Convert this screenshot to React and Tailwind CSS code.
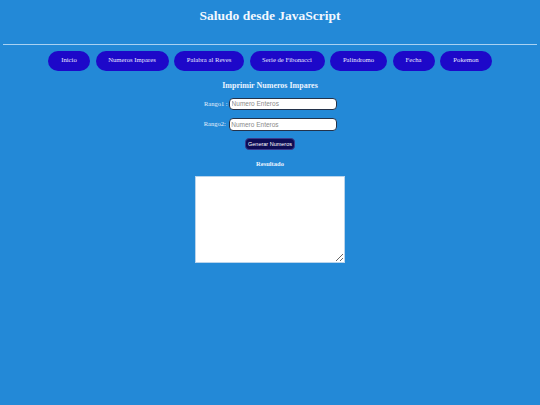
import React from "react";

const navItems = [
  "Inicio",
  "Numeros Impares",
  "Palabra al Reves",
  "Serie de Fibonacci",
  "Palindromo",
  "Fecha",
  "Pokemon",
];

const widths = {
  Inicio: "w-[42px]",
  "Numeros Impares": "w-[73px]",
  "Palabra al Reves": "w-[70px]",
  "Serie de Fibonacci": "w-[75px]",
  Palindromo: "w-[57px]",
  Fecha: "w-[42px]",
  Pokemon: "w-[52px]",
};

export default function App() {
  return (
    <div
      className="min-h-[405px] w-full bg-[#2389d7] px-[3px] text-white"
      style={{ fontFamily: '"Liberation Serif", serif' }}
    >
      <h1 className="pt-[8px] text-center text-[13.5px] font-bold leading-[16px] text-[#f2f8ff]">
        Saludo desde JavaScript
      </h1>
      <div className="mt-[20px] h-[1px] bg-[#a9d1f2]" />
      <nav className="mt-[5.5px] flex justify-center gap-[5.5px]">
        {navItems.map((item) => (
          <button
            key={item}
            className={`${widths[item]} flex h-[20px] items-center justify-center rounded-full bg-[#1d08c9] text-[6.7px] text-[#e6e6ff]`}
          >
            {item}
          </button>
        ))}
      </nav>
      <section className="flex flex-col items-center">
        <h3 className="mt-[10px] text-[8px] font-bold leading-[10px] text-[#eaf4ff]">
          Imprimir Numeros Impares
        </h3>
        <div className="mt-[7px] flex items-center pl-[1px]">
          <span className="mr-[1.5px] text-[6.5px] text-[#e3f0fc]">Rango1 :</span>
          <input
            placeholder="Numero Enteros"
            className="h-[12.5px] w-[108px] rounded-[4px] border border-[#23324a] bg-white px-[1.5px] text-[6.5px] placeholder:text-[#8a8a8a]"
            style={{ fontFamily: '"Liberation Sans", sans-serif' }}
          />
        </div>
        <div className="mt-[8px] flex items-center pl-[1px]">
          <span className="mr-[3px] text-[6.5px] text-[#e3f0fc]">Rango2:</span>
          <input
            placeholder="Numero Enteros"
            className="h-[12.5px] w-[108.5px] rounded-[4px] border border-[#23324a] bg-white px-[1.5px] text-[6.5px] placeholder:text-[#8a8a8a]"
            style={{ fontFamily: '"Liberation Sans", sans-serif' }}
          />
        </div>
        <button
          className="mt-[7px] flex h-[12.5px] w-[50.5px] items-center justify-center rounded-[4px] border border-[#3a3a8a] bg-[#0c0c55] text-[5.5px] text-white"
          style={{ fontFamily: '"Liberation Sans", sans-serif' }}
        >
          Generar Numeros
        </button>
        <h4 className="mt-[9.5px] text-[6.5px] font-bold leading-[8px] text-[#eaf4ff]">
          Resultado
        </h4>
        <textarea className="mt-[8.5px] h-[87px] w-[150px] border border-[#b9d4ec] bg-white" />
      </section>
    </div>
  );
}
